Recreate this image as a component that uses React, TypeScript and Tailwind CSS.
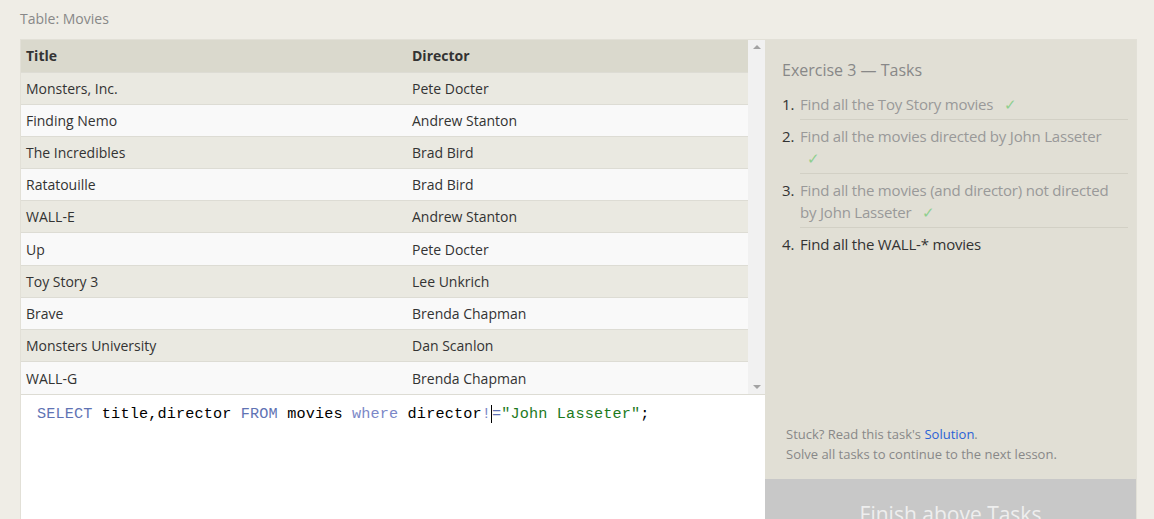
const movies: [string, string][] = [
  ["Monsters, Inc.", "Pete Docter"],
  ["Finding Nemo", "Andrew Stanton"],
  ["The Incredibles", "Brad Bird"],
  ["Ratatouille", "Brad Bird"],
  ["WALL-E", "Andrew Stanton"],
  ["Up", "Pete Docter"],
  ["Toy Story 3", "Lee Unkrich"],
  ["Brave", "Brenda Chapman"],
  ["Monsters University", "Dan Scanlon"],
  ["WALL-G", "Brenda Chapman"],
];

type Task = { text: string; done: boolean };

const tasks: Task[] = [
  { text: "Find all the Toy Story movies", done: true },
  { text: "Find all the movies directed by John Lasseter", done: true },
  { text: "Find all the movies (and director) not directed by John Lasseter", done: true },
  { text: "Find all the WALL-* movies", done: false },
];

function Check() {
  return <span className="ml-[7px] text-[#8fcf8f]">✓</span>;
}

export default function App() {
  return (
    <div className="h-[519px] overflow-hidden bg-[#efede6] pl-5 pt-[9px] font-['Open_Sans',sans-serif]">
      <p className="text-[14px] leading-[20px] text-[#888]">Table: Movies</p>
      <div className="mt-[10px] flex w-[1117px] border border-[#e2e0d7]">
        {/* table + editor */}
        <div className="flex w-[744px] flex-col">
          <div className="flex h-[354px]">
            <table className="w-[727px] border-collapse text-[14px] text-[#333]">
              <thead>
                <tr className="h-[32px] bg-[#dad9cd]">
                  <th className="w-[386px] pl-[5px] text-left font-bold">Title</th>
                  <th className="pl-[5px] text-left font-bold">Director</th>
                </tr>
              </thead>
              <tbody>
                {movies.map(([title, director], i) => (
                  <tr
                    key={title}
                    className={
                      i % 2 === 0
                        ? "h-[32px] border-t border-[#dddcd4] bg-[#eae9e1]"
                        : "h-[32px] border-t border-[#dddcd4] bg-[#f9f9f9]"
                    }
                  >
                    <td className="pl-[5px]">{title}</td>
                    <td className="pl-[5px]">{director}</td>
                  </tr>
                ))}
              </tbody>
            </table>
            <div className="flex w-[17px] flex-col items-center justify-between bg-[#f1f1f1] py-[5px]">
              <span className="h-0 w-0 border-x-[4px] border-b-[4px] border-x-transparent border-b-[#a3a3a3]" />
              <span className="h-0 w-0 border-x-[4px] border-t-[4px] border-x-transparent border-t-[#a3a3a3]" />
            </div>
          </div>
          <div className="flex-1 border-t border-[#dddcd4] bg-white px-[16px] pt-[8px] font-['Liberation_Mono',monospace] text-[15.2px] leading-[22px] tracking-[0.15px]">
            <span className="text-[#5f73b4]">SELECT</span>
            <span className="text-black"> title,director </span>
            <span className="text-[#5f73b4]">FROM</span>
            <span className="text-black"> movies </span>
            <span className="text-[#7b87c7]">where</span>
            <span className="text-black"> director</span>
            <span className="text-[#7b87c7]">!</span>
            <span className="border-l border-black text-[#5f73b4]">=</span>
            <span className="text-[#1d7a1d]">"John Lasseter"</span>
            <span className="text-black">;</span>
          </div>
        </div>
        {/* tasks */}
        <div className="flex h-[499px] w-[372px] flex-col bg-[#e1dfd5]">
          <div className="flex-1 pl-[17px] pr-[8px] pt-[19px]">
            <h2 className="text-[16px] leading-[22px] text-[#888]">Exercise 3 — Tasks</h2>
            <ol className="mt-[7px] pl-[18px] text-[15px] leading-[22px] tracking-[-0.2px]">
              {tasks.map((t, i) => (
                <li
                  key={t.text}
                  className={
                    i < tasks.length - 1
                      ? "flex border-b border-[#d2d0c5] pb-[4px] pt-[5px]"
                      : "flex pb-[4px] pt-[5px]"
                  }
                >
                  <span className="-ml-[18px] w-[18px] shrink-0 text-[#333]">{i + 1}.</span>
                  <span className={t.done ? "max-w-[315px] text-[#999]" : "max-w-[315px] text-[#333]"}>
                    {t.text}
                    {t.done && " "}
                    {t.done && <Check />}
                  </span>
                </li>
              ))}
            </ol>
          </div>
          <div className="px-[21px] pb-[15px] text-[13px] leading-[20px] text-[#888]">
            <p>
              Stuck? Read this task's <span className="text-[#2a62d6]">Solution</span>.
            </p>
            <p>Solve all tasks to continue to the next lesson.</p>
          </div>
          <div className="h-[60px] bg-[#c8c8c8] pt-[20px] text-center text-[21px] leading-[30px] text-[#eeeeee]">
            Finish above Tasks
          </div>
        </div>
      </div>
    </div>
  );
}
